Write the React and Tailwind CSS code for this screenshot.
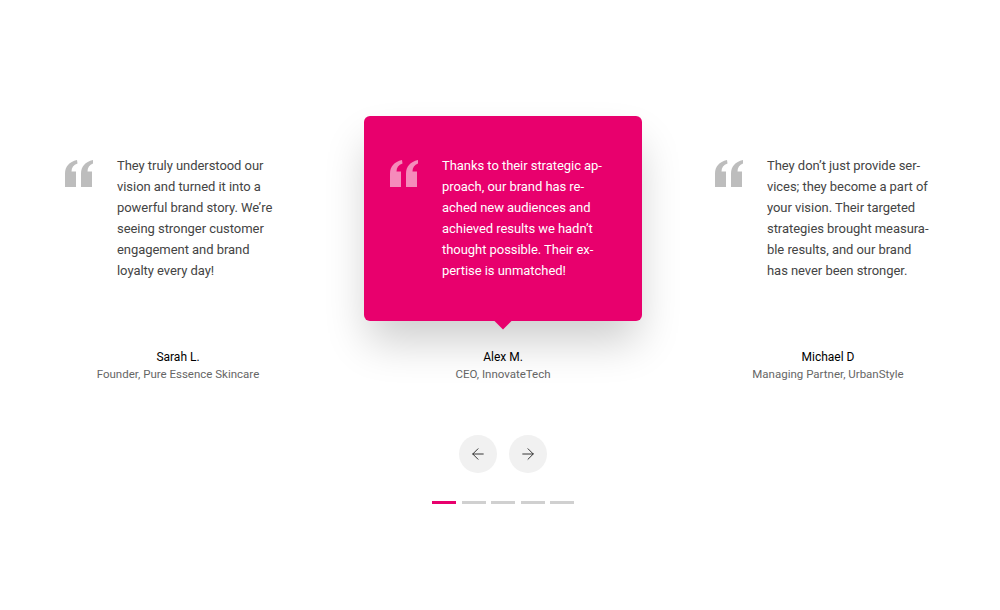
import { ArrowLeft, ArrowRight } from 'lucide-react'

const items = [
    {
        id: 'sarah',
        text: 'They truly understood our vision and turned it into a powerful brand story. We\u2019re seeing stronger customer engagement and brand loyalty every day!',
        name: 'Sarah L.',
        role: 'Founder, Pure Essence Skincare',
    },
    {
        id: 'alex',
        text: 'Thanks to their strategic ap\u00ADproach, our brand has re\u00ADached new audiences and achieved results we hadn\u2019t thought possible. Their ex\u00ADpertise is unmatched!',
        name: 'Alex M.',
        role: 'CEO, InnovateTech',
        active: true,
    },
    {
        id: 'michael',
        text: 'They don\u2019t just provide ser\u00ADvices; they become a part of your vision. Their targeted strategies brought measura\u00ADble results, and our brand has never been stronger.',
        name: 'Michael D',
        role: 'Managing Partner, UrbanStyle',
    },
]

function QuoteMark({ className }) {
    // blocky opening quote, two "6" shaped marks
    return (
        <svg width="28" height="27" viewBox="0 0 28 27" className={className} fill="currentColor">
            <path d="M0 27 L0 13.5 C0 6.5 4 2 12 0 L12.5 3.5 C8.5 5 6.5 7.5 6.5 11.5 L11 11.5 L11 27 Z" />
            <path d="M16 27 L16 13.5 C16 6.5 20 2 28 0 L28 3.5 C24.5 5 22.5 7.5 22.5 11.5 L27 11.5 L27 27 Z" />
        </svg>
    )
}

function Testimonial({ item }) {
    return (
        <div className="w-[278px] flex flex-col items-center">
            <div
                className={`relative w-full h-[205px] rounded-md flex gap-6 pl-[26px] pr-7 pt-[39px] ${item.active
                    ? 'bg-[#e8006d] shadow-[0_24px_44px_-4px_rgba(0,0,0,0.2)]'
                    : ''
                    }`}
            >
                <QuoteMark className={`shrink-0 mt-[5px] ${item.active ? 'text-[#f58bbb]' : 'text-[#bdbdbd]'}`} />
                <p
                    lang="en"
                    className={`w-[165px] text-[13px] leading-[21px] tracking-[-0.05px] ${item.active ? 'text-white' : 'text-[#444]'}`}
                >
                    {item.text}
                </p>
                {item.active && (
                    <div className="absolute left-1/2 -bottom-[6px] w-3 h-3 -translate-x-1/2 rotate-45 bg-[#e8006d]" />
                )}
            </div>
            <div className="mt-[28px] text-center">
                <div className="text-[12px] leading-[17px] text-black">{item.name}</div>
                <div className="text-[11.5px] leading-[17px] text-[#666]">{item.role}</div>
            </div>
        </div>
    )
}

export default function App() {
    return (
        <div
            className="w-full h-[610px] bg-white flex flex-col items-center pt-[116px]"
            style={{ fontFamily: 'Roboto, "Noto Sans", sans-serif' }}
        >
            {/* Cards */}
            <div className="flex gap-[47px] pl-[6px]">
                {items.map((item) => (
                    <Testimonial key={item.id} item={item} />
                ))}
            </div>

            {/* Arrows */}
            <div className="flex gap-3 mt-[52px] pl-[6px]">
                <button className="w-[38px] h-[38px] rounded-full bg-[#f1f1f1] flex items-center justify-center text-[#222]">
                    <ArrowLeft size={18} strokeWidth={1.2} />
                </button>
                <button className="w-[38px] h-[38px] rounded-full bg-[#f1f1f1] flex items-center justify-center text-[#222]">
                    <ArrowRight size={18} strokeWidth={1.2} />
                </button>
            </div>

            {/* Dots */}
            <div className="flex gap-[5.5px] mt-[28px] pl-[6px]">
                {[0, 1, 2, 3, 4].map((i) => (
                    <div key={i} className={`w-6 h-[3px] ${i === 0 ? 'bg-[#e8006d]' : 'bg-[#d0d0d0]'}`} />
                ))}
            </div>
        </div>
    )
}
